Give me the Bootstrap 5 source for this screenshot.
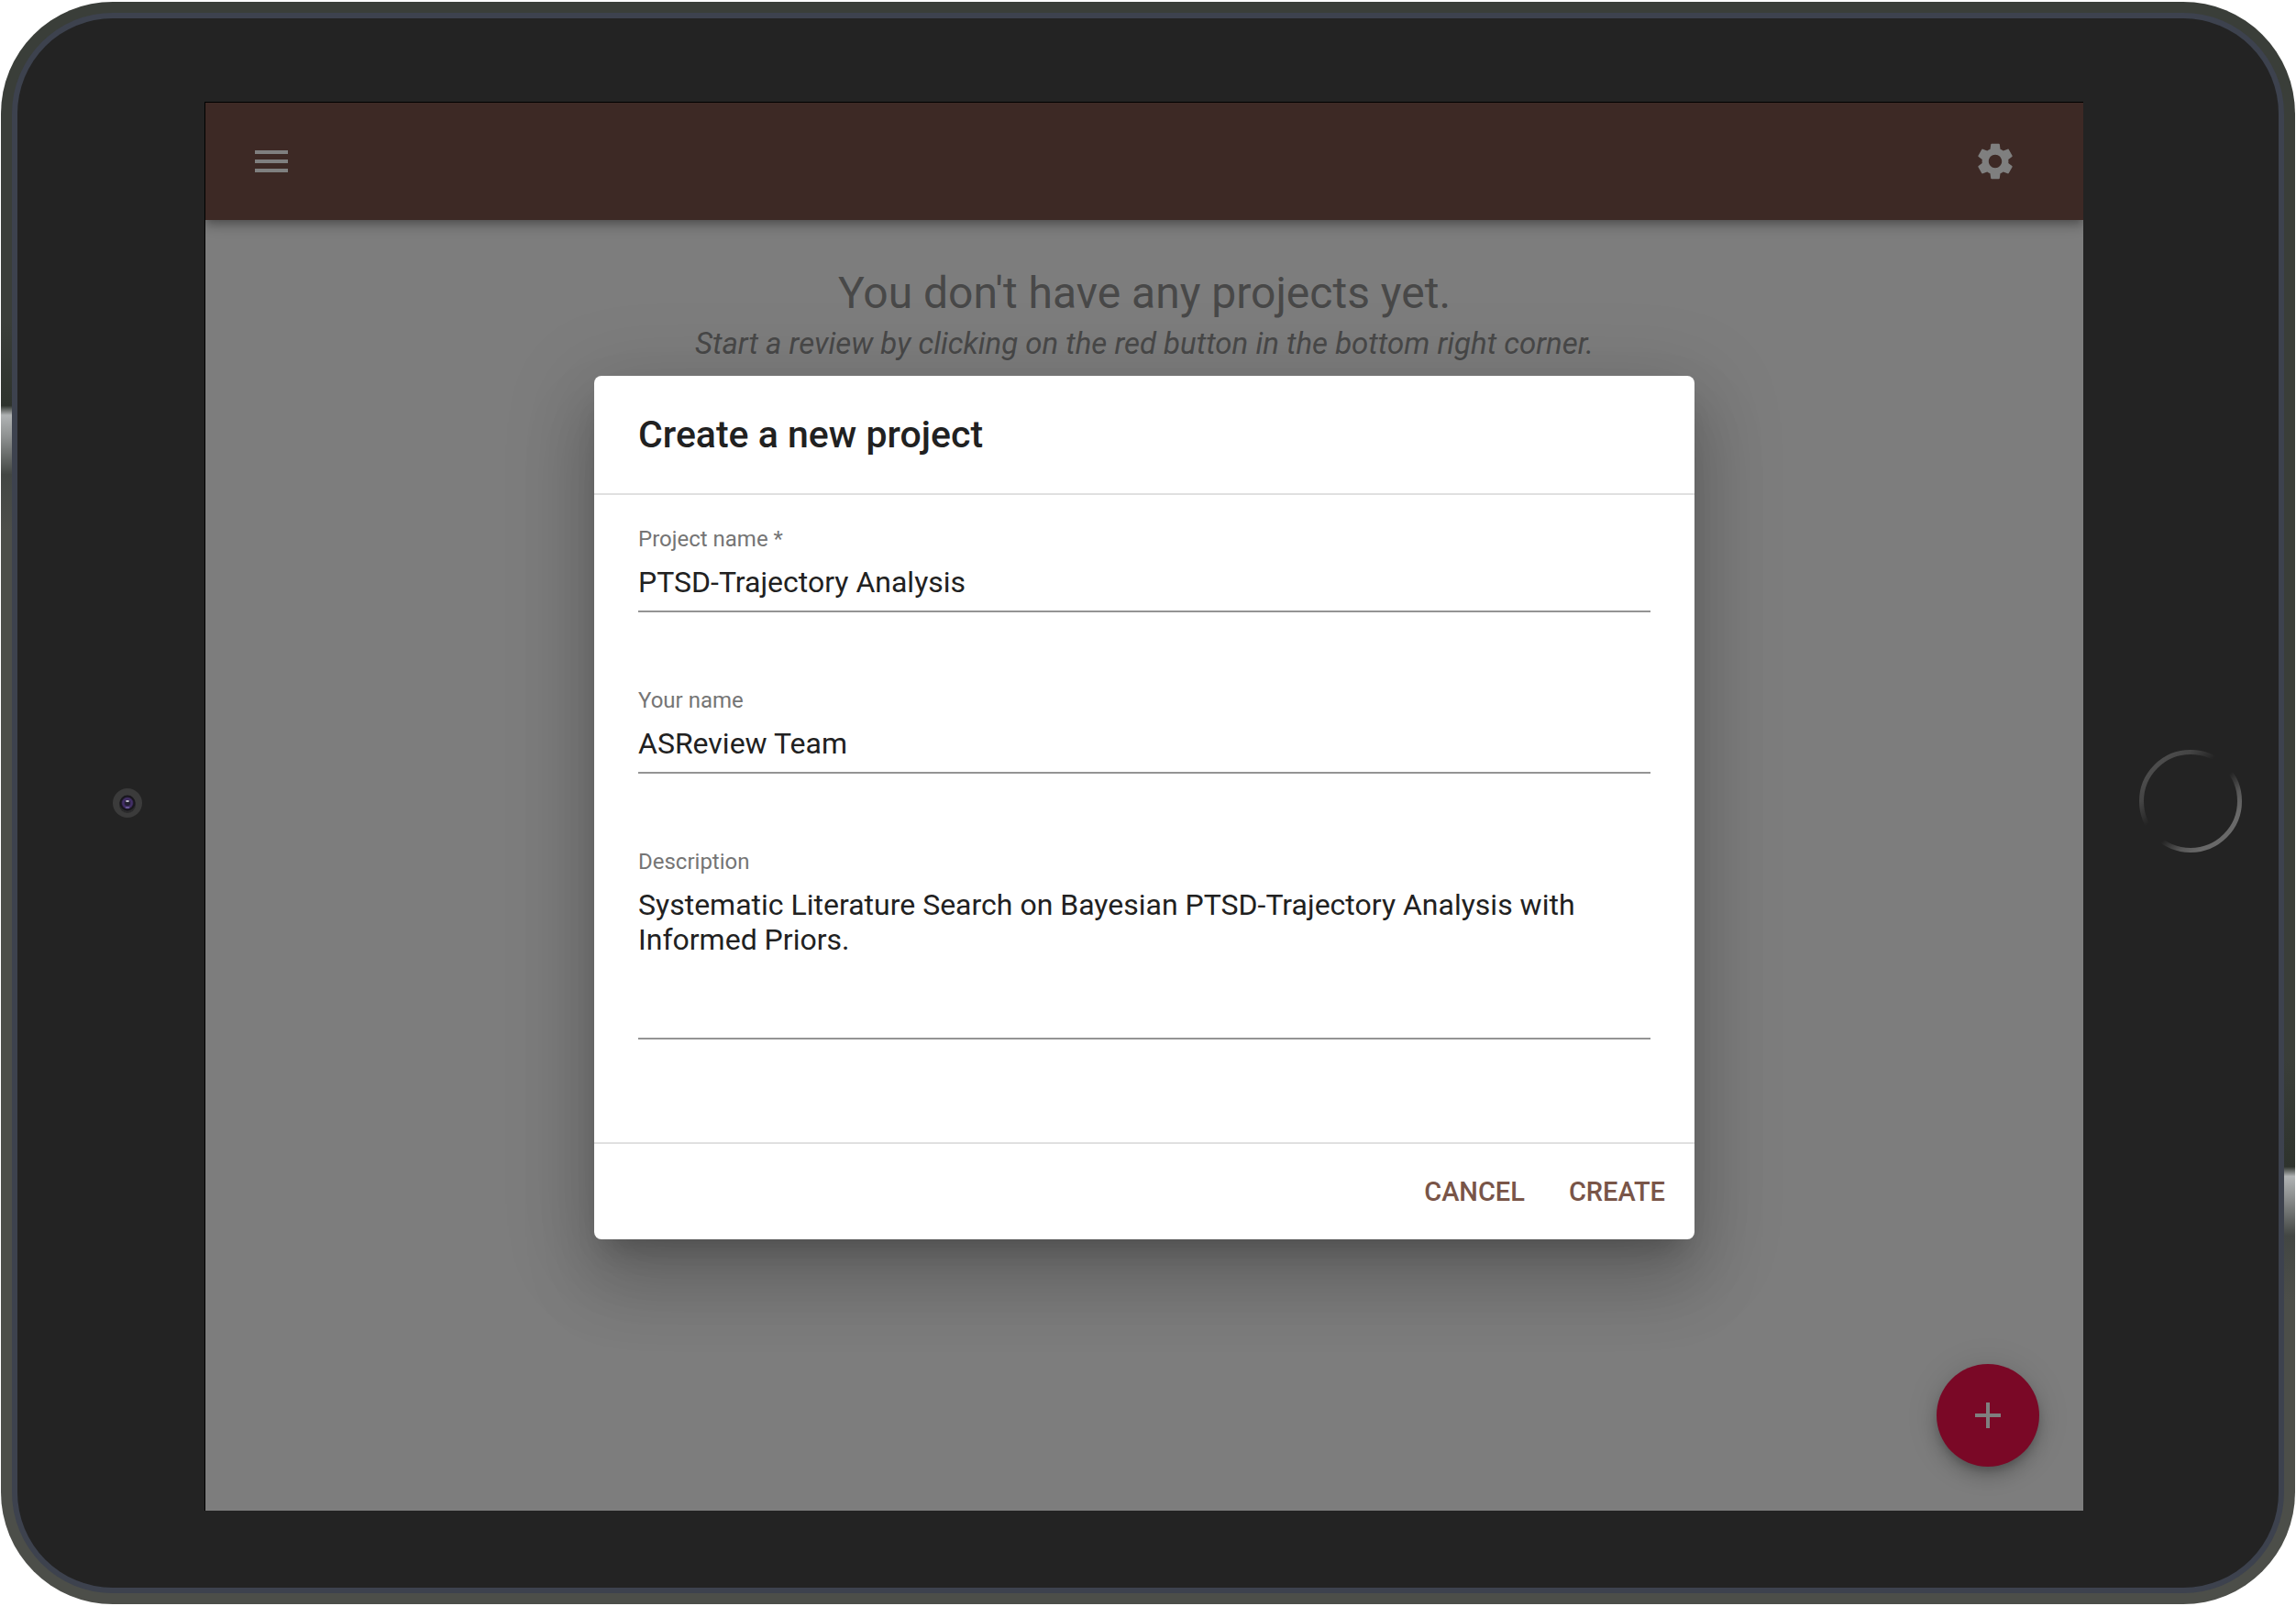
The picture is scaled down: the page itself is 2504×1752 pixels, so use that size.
<!DOCTYPE html>
<html lang="en">
<head>
<meta charset="utf-8">
<meta name="viewport" content="width=device-width, initial-scale=1">
<title>ASReview – Create a new project</title>
<link href="https://cdn.jsdelivr.net/npm/bootstrap@5.3.0/dist/css/bootstrap.min.css" rel="stylesheet">
<style>
  body { font-family: Roboto, "Liberation Sans", sans-serif; background: #fff; color: #212121; }

  /* Tablet casing: metal edge, chamfer, glass */
  .tablet {
    margin: 2px 1px; padding: 12px; border-radius: 122px;
    min-height: calc(100vh - 4px);
    background:
      linear-gradient(#3a3e39 0, #3a3e39 20%, #2e332d 25.2%, #b0b3b4 25.8%, #8c8f8f 27.2%, #424643 29.5%, #4c4e49 33%, #4c4e49 100%) left / 50% 100% no-repeat,
      linear-gradient(#3a3e39 0, #3a3e39 66%, #2e332d 72.7%, #b0b3b4 73.3%, #8c8f8f 74.6%, #424643 77%, #4c4e49 81%, #4c4e49 100%) right / 50% 100% no-repeat;
  }
  .chamfer { padding: 6px; border-radius: 110px; background: #3d424e; }
  .glass { border-radius: 104px; background: #232323; }
  .bezel-start { flex: 0 0 204px; padding-left: 36px; }
  .bezel-end { flex: 0 0 213px; padding-left: 20px; }
  .viewport { margin: 91px 0 84px; border: solid #000; border-width: 1px 0 0 1px; background: #fafafa; min-width: 0; }

  /* App */
  .app-bar {
    padding: 16px 48px 16px 24px; background: #7a524a;
    box-shadow: 0 4px 8px -2px rgba(0,0,0,.2), 0 8px 10px 0 rgba(0,0,0,.14), 0 2px 20px 0 rgba(0,0,0,.12);
  }
  .icon-btn { padding: 24px; border: 0; border-radius: 50%; color: #fff; line-height: 1; }
  .icon-btn svg, .fab svg { width: 48px; height: 48px; fill: currentColor; display: block; }
  .empty-note { padding-top: 48px; color: #909090; }
  .empty-title { font-size: 48px; line-height: 64px; font-weight: 400; }
  .empty-hint { font-size: 33px; line-height: 46px; }
  .fab {
    right: 48px; bottom: 48px; width: 112px; height: 112px; padding: 32px; border: 0;
    background: #f4104c; color: #fff;
    box-shadow: 0 6px 10px -2px rgba(0,0,0,.2), 0 12px 20px 0 rgba(0,0,0,.14), 0 2px 36px 0 rgba(0,0,0,.12);
  }

  /* Dialog */
  .scrim { background: rgba(0,0,0,.5); padding-top: 2px; }
  .dialog {
    width: 1200px; max-width: calc(100% - 64px); border-radius: 8px; background: #fff;
    box-shadow: 0 22px 30px -14px rgba(0,0,0,.2), 0 48px 76px 6px rgba(0,0,0,.14), 0 18px 92px 16px rgba(0,0,0,.12);
  }
  .dialog-head { padding: 32px 48px; }
  .dialog-title { font-size: 41px; line-height: 64px; font-weight: 500; }
  .dialog-main { padding: 32px 48px; border: solid #e0e0e0; border-width: 2px 0; }
  .field { margin-bottom: 80px; }
  .field label { font-size: 24px; line-height: 32px; color: #757575; }
  .field .form-control {
    padding: 12px 0; border: 0; border-bottom: 2px solid #949494; border-radius: 0;
    font-size: 32px; line-height: 38px; color: #212121; resize: none; min-height: 0; box-shadow: none;
  }
  .field input.form-control { height: 64px; }
  .field textarea.form-control { height: 178px; overflow: hidden; }
  .dialog-foot { padding: 16px; gap: 16px; }
  .text-btn { padding: 12px 16px; border: 0; font-size: 29px; line-height: 48px; font-weight: 500; color: #795548; text-transform: uppercase; }
</style>
<script src="https://cdn.jsdelivr.net/npm/bootstrap@5.3.0/dist/js/bootstrap.bundle.min.js"></script>
</head>
<body>
<div class="tablet d-flex">
  <div class="chamfer d-flex flex-grow-1">
    <div class="glass d-flex flex-grow-1">

      <div class="bezel-start d-flex align-items-center justify-content-center">
        <svg width="32" height="32" viewBox="0 0 32 32" aria-hidden="true">
          <defs>
            <radialGradient id="lens"><stop offset="0" stop-color="#2a2540"/><stop offset=".4" stop-color="#33264f"/><stop offset=".75" stop-color="#45306a"/><stop offset="1" stop-color="#2c2142"/></radialGradient>
          </defs>
          <circle cx="16" cy="16" r="16" fill="#3b3b3b"/>
          <circle cx="16" cy="18" r="9" fill="#2a2a2b"/>
          <circle cx="16" cy="16" r="8.5" fill="#19171d"/>
          <circle cx="16" cy="16" r="6.5" fill="url(#lens)"/>
          <circle cx="16" cy="16" r="3" fill="#221f30"/>
          <ellipse cx="16" cy="14" rx="2" ry="1" fill="#c9c4d4"/>
          <ellipse cx="16" cy="21" rx="2.5" ry="1" fill="#6b5a9a"/>
        </svg>
      </div>

      <div class="viewport position-relative d-flex flex-column flex-grow-1 overflow-hidden">
        <header class="app-bar d-flex justify-content-between">
          <button type="button" class="btn icon-btn" aria-label="Menu">
            <svg viewBox="0 0 24 24"><path d="M3 18h18v-2H3v2zm0-5h18v-2H3v2zm0-7v2h18V6H3z"/></svg>
          </button>
          <button type="button" class="btn icon-btn" aria-label="Settings">
            <svg viewBox="0 0 24 24"><path d="M19.14 12.94c.04-.3.06-.61.06-.94 0-.32-.02-.64-.07-.94l2.03-1.58c.18-.14.23-.41.12-.61l-1.92-3.32c-.12-.22-.37-.29-.59-.22l-2.39.96c-.5-.38-1.03-.7-1.62-.94l-.36-2.54c-.04-.24-.24-.41-.48-.41h-3.84c-.24 0-.43.17-.47.41l-.36 2.54c-.59.24-1.13.57-1.62.94l-2.39-.96c-.22-.08-.47 0-.59.22L2.74 8.87c-.12.21-.08.47.12.61l2.03 1.58c-.05.3-.09.63-.09.94s.02.64.07.94l-2.03 1.58c-.18.14-.23.41-.12.61l1.92 3.32c.12.22.37.29.59.22l2.39-.96c.5.38 1.03.7 1.62.94l.36 2.54c.05.24.24.41.48.41h3.84c.24 0 .44-.17.47-.41l.36-2.54c.59-.24 1.13-.56 1.62-.94l2.39.96c.22.08.47 0 .59-.22l1.92-3.32c.12-.22.07-.47-.12-.61l-2.01-1.58zM12 15.6c-1.98 0-3.6-1.62-3.6-3.6s1.62-3.6 3.6-3.6 3.6 1.62 3.6 3.6-1.62 3.6-3.6 3.6z"/></svg>
          </button>
        </header>

        <main class="empty-note text-center">
          <h1 class="empty-title mb-0">You don't have any projects yet.</h1>
          <p class="empty-hint fst-italic mb-0">Start a review by clicking on the red button in the bottom right corner.</p>
        </main>

        <button type="button" class="btn fab rounded-circle position-absolute" aria-label="Add project">
          <svg viewBox="0 0 24 24"><path d="M19 13h-6v6h-2v-6H5v-2h6V5h2v6h6v2z"/></svg>
        </button>

        <div class="scrim position-absolute top-0 start-0 w-100 h-100 d-flex align-items-center justify-content-center overflow-hidden">
          <form class="dialog" role="dialog" aria-modal="true" aria-labelledby="dialogTitle">
            <div class="dialog-head">
              <h2 class="dialog-title mb-0" id="dialogTitle">Create a new project</h2>
            </div>
            <div class="dialog-main">
              <div class="field">
                <label class="d-block" for="projectName">Project name *</label>
                <input class="form-control bg-transparent" type="text" id="projectName" value="PTSD-Trajectory Analysis" required>
              </div>
              <div class="field">
                <label class="d-block" for="yourName">Your name</label>
                <input class="form-control bg-transparent" type="text" id="yourName" value="ASReview Team">
              </div>
              <div class="field">
                <label class="d-block" for="description">Description</label>
                <textarea class="form-control bg-transparent" id="description" rows="4">Systematic Literature Search on Bayesian PTSD-Trajectory Analysis with Informed Priors.</textarea>
              </div>
            </div>
            <div class="dialog-foot d-flex justify-content-end">
              <button type="button" class="btn text-btn">Cancel</button>
              <button type="submit" class="btn text-btn">Create</button>
            </div>
          </form>
        </div>
      </div>

      <div class="bezel-end d-flex align-items-center justify-content-center pb-1">
        <svg width="112" height="112" viewBox="0 0 112 112" aria-hidden="true">
          <defs>
            <linearGradient id="ring" x1="0" y1="0" x2="1" y2="1">
              <stop offset=".15" stop-color="#4c4c4c"/><stop offset=".25" stop-color="#444"/><stop offset=".4" stop-color="#232323"/>
              <stop offset=".56" stop-color="#232323"/><stop offset=".7" stop-color="#585858"/><stop offset=".8" stop-color="#696969"/>
            </linearGradient>
          </defs>
          <circle cx="56" cy="56" r="53.5" fill="none" stroke="url(#ring)" stroke-width="5"/>
        </svg>
      </div>

    </div>
  </div>
</div>
</body>
</html>
